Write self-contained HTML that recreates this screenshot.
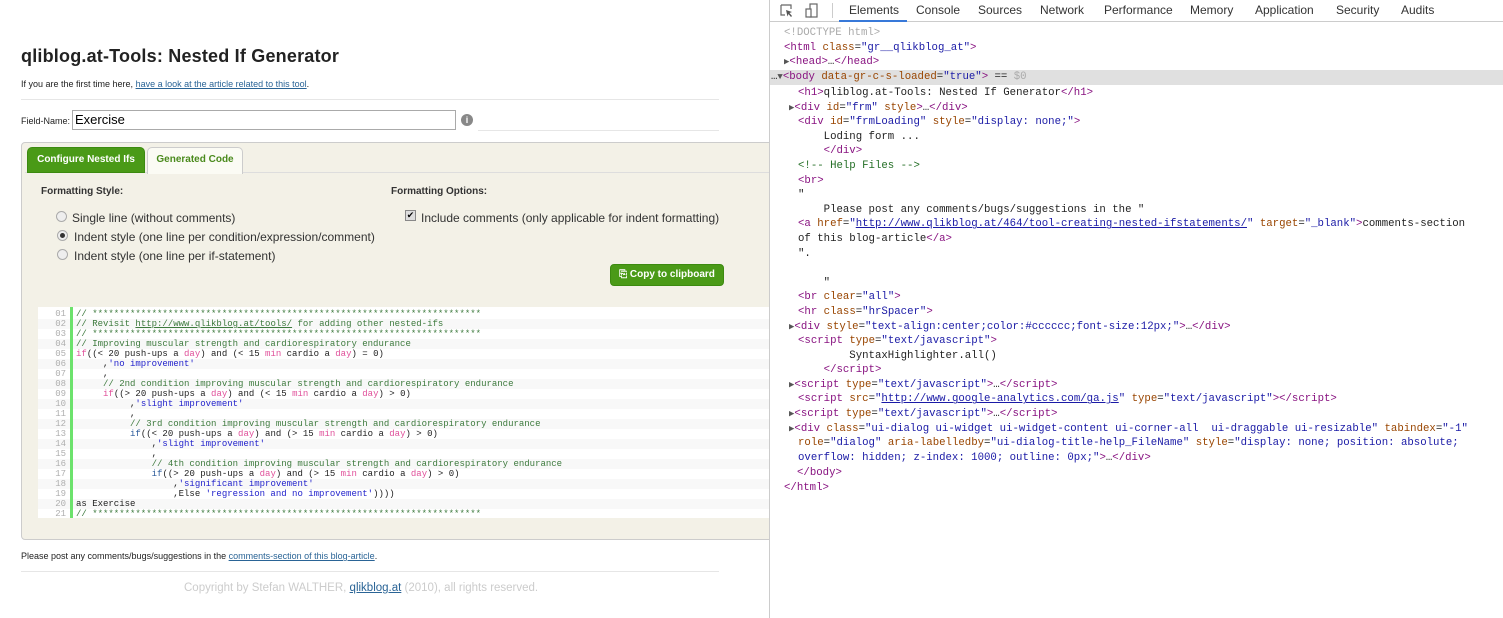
<!DOCTYPE html>
<html><head><meta charset="utf-8"><style>
*{margin:0;padding:0;box-sizing:border-box}
body{width:1503px;height:618px;overflow:hidden;background:#fff;font-family:"Liberation Sans",sans-serif;position:relative}
.a{position:absolute;white-space:pre}
#left{position:absolute;left:0;top:0;width:769px;height:618px;overflow:hidden}
#dv{position:absolute;left:769px;top:0;width:734px;height:618px;border-left:1px solid #ccc;overflow:hidden}
h1{position:absolute;left:21px;top:46px;font-size:18px;font-weight:bold;color:#222;letter-spacing:0.2px}
.sm{font-size:9px;color:#222}
a{color:#2a6496}
.hr{position:absolute;height:1px;background:#e6e6e6}
.panel{position:absolute;left:21px;top:142px;width:760px;height:398px;background:#f3f1e7;border:1px solid #ccc;border-radius:4px}
.tabbar{position:absolute;left:3px;top:3px;right:0;height:27px;border-bottom:1px solid #ddd}
.tab{position:absolute;top:4px;height:26px;border-radius:5px 5px 0 0;font-size:10px;font-weight:bold;line-height:24px;text-align:center}
.code{position:absolute;left:38px;top:307px;width:740px;height:211px;background:#fff}
.ln{position:absolute;left:0;height:10px;width:740px;font-family:"Liberation Mono",monospace;font-size:9px;line-height:10px;color:#222}
.ln:nth-child(odd){background:#f8f8f8}
.ln .n{position:absolute;left:0;width:28px;text-align:right;color:#afafaf}
.ln .t{position:absolute;left:38px;white-space:pre}
.bar{position:absolute;left:32px;top:0;width:3px;height:211px;background:#6ce26c;z-index:5}
.c{color:#3d7a3d}.s{color:#2222cc}.k{color:#2a5a9a;}.p{color:#e0509a}
.d{position:absolute;font-family:"Liberation Mono",monospace;font-size:10.7px;white-space:pre;color:#222;line-height:14.6px}
.tg{color:#881280}.an{color:#994500}.av{color:#1a1aa6}.cm{color:#236e25}.g{color:#aaa}
.tri{color:#555;font-size:9px}
</style></head><body>
<div id="left">
<h1>qliblog.at-Tools: Nested If Generator</h1>
<div class="a sm" style="left:21px;top:79px">If you are the first time here, <a href="#">have a look at the article related to this tool</a>.</div>
<div class="hr" style="left:21px;top:99px;width:698px"></div>
<div class="a sm" style="left:21px;top:116px">Field-Name:</div>
<div class="a" style="left:72px;top:110px;width:384px;height:20px;border:1px solid #aaa;background:#fff;font-size:13px;padding:1px 2px">Exercise</div>
<div class="a" style="left:461px;top:114px;width:12px;height:12px;border-radius:50%;background:#888;color:#fff;font-size:9px;font-weight:bold;text-align:center;line-height:12px">i</div>
<div class="hr" style="left:478px;top:130px;width:241px"></div>
<div class="panel">
 <div class="tabbar"></div>
 <div class="tab" style="left:5px;width:118px;background:#4a9a17;color:#fff;border:1px solid #3c8a10">Configure Nested Ifs</div>
 <div class="tab" style="left:125px;width:96px;background:#fbfbf4;color:#4a8a1c;border:1px solid #ccc;border-bottom:none;height:27px">Generated Code</div>
</div>
<div class="a" style="left:41px;top:186px;font-size:10px;font-weight:bold;color:#333">Formatting Style:</div>
<div class="a" style="left:391px;top:186px;font-size:10px;font-weight:bold;color:#333">Formatting Options:</div>
<div class="a" style="left:56px;top:211px;width:11px;height:11px;border-radius:50%;border:1px solid #aaa;background:#eee"></div>
<div class="a" style="left:72px;top:211px;font-size:12px;color:#333">Single line (without comments)</div>
<div class="a" style="left:57px;top:230px;width:11px;height:11px;border-radius:50%;border:1px solid #aaa;background:#eee"><div style="width:5px;height:5px;border-radius:50%;background:#333;margin:2px"></div></div>
<div class="a" style="left:74px;top:230px;font-size:12px;color:#333">Indent style (one line per condition/expression/comment)</div>
<div class="a" style="left:57px;top:249px;width:11px;height:11px;border-radius:50%;border:1px solid #aaa;background:#eee"></div>
<div class="a" style="left:74px;top:249px;font-size:12px;color:#333">Indent style (one line per if-statement)</div>
<div class="a" style="left:405px;top:210px;width:11px;height:11px;border:1px solid #888;background:#ddd;font-size:9px;line-height:9px;text-align:center">✔</div>
<div class="a" style="left:421px;top:211px;font-size:12px;color:#333">Include comments (only applicable for indent formatting)</div>
<div class="a" style="left:610px;top:264px;width:114px;height:22px;background:#4a9a17;border:1px solid #3c8a10;border-radius:4px;color:#fff;font-size:10px;font-weight:bold;line-height:20px;text-align:center">⎘ Copy to clipboard</div>
<div class="code">
<div class="bar"></div>
<div class="ln" style="top:2px"><span class="n">01</span><span class="t c">// ************************************************************************</span></div>
<div class="ln" style="top:12px"><span class="n">02</span><span class="t c">// Revisit <u>http://www.qlikblog.at/tools/</u> for adding other nested-ifs</span></div>
<div class="ln" style="top:22px"><span class="n">03</span><span class="t c">// ************************************************************************</span></div>
<div class="ln" style="top:32px"><span class="n">04</span><span class="t c">// Improving muscular strength and cardiorespiratory endurance</span></div>
<div class="ln" style="top:42px"><span class="n">05</span><span class="t"><span class="p">if</span>((&lt; 20 push-ups a <span class="p">day</span>) and (&lt; 15 <span class="p">min</span> cardio a <span class="p">day</span>) = 0)</span></div>
<div class="ln" style="top:52px"><span class="n">06</span><span class="t">     ,<span class="s">'no improvement'</span></span></div>
<div class="ln" style="top:62px"><span class="n">07</span><span class="t">     ,</span></div>
<div class="ln" style="top:72px"><span class="n">08</span><span class="t c">     // 2nd condition improving muscular strength and cardiorespiratory endurance</span></div>
<div class="ln" style="top:82px"><span class="n">09</span><span class="t">     <span class="p">if</span>((&gt; 20 push-ups a <span class="p">day</span>) and (&lt; 15 <span class="p">min</span> cardio a <span class="p">day</span>) &gt; 0)</span></div>
<div class="ln" style="top:92px"><span class="n">10</span><span class="t">          ,<span class="s">'slight improvement'</span></span></div>
<div class="ln" style="top:102px"><span class="n">11</span><span class="t">          ,</span></div>
<div class="ln" style="top:112px"><span class="n">12</span><span class="t c">          // 3rd condition improving muscular strength and cardiorespiratory endurance</span></div>
<div class="ln" style="top:122px"><span class="n">13</span><span class="t">          <span class="k">if</span>((&lt; 20 push-ups a <span class="p">day</span>) and (&gt; 15 <span class="p">min</span> cardio a <span class="p">day</span>) &gt; 0)</span></div>
<div class="ln" style="top:132px"><span class="n">14</span><span class="t">              ,<span class="s">'slight improvement'</span></span></div>
<div class="ln" style="top:142px"><span class="n">15</span><span class="t">              ,</span></div>
<div class="ln" style="top:152px"><span class="n">16</span><span class="t c">              // 4th condition improving muscular strength and cardiorespiratory endurance</span></div>
<div class="ln" style="top:162px"><span class="n">17</span><span class="t">              <span class="k">if</span>((&gt; 20 push-ups a <span class="p">day</span>) and (&gt; 15 <span class="p">min</span> cardio a <span class="p">day</span>) &gt; 0)</span></div>
<div class="ln" style="top:172px"><span class="n">18</span><span class="t">                  ,<span class="s">'significant improvement'</span></span></div>
<div class="ln" style="top:182px"><span class="n">19</span><span class="t">                  ,Else <span class="s">'regression and no improvement'</span>))))</span></div>
<div class="ln" style="top:192px"><span class="n">20</span><span class="t">as Exercise</span></div>
<div class="ln" style="top:202px"><span class="n">21</span><span class="t c">// ************************************************************************</span></div>
</div>
<div class="a sm" style="left:21px;top:551px">Please post any comments/bugs/suggestions in the <a href="#">comments-section of this blog-article</a>.</div>
<div class="hr" style="left:21px;top:571px;width:698px"></div>
<div class="a" style="left:184px;top:582px;font-size:11.5px;color:#ccc">Copyright by Stefan WALTHER, <a href="#" style="color:#2a6496">qlikblog.at</a> (2010), all rights reserved.</div>
</div>
<div id="dv">
<div class="a" style="left:0;top:0;width:734px;height:22px;border-bottom:1px solid #ccc;background:#fff"></div>
<svg class="a" style="left:9px;top:3px" width="40" height="16" viewBox="0 0 40 16"><path d="M2 2h10v4M2 2v10h4" fill="none" stroke="#666" stroke-width="1.2"/><path d="M7 7l6 2-2.5 1 2.5 3-1 1-2.5-3-1 2.5z" fill="#555"/><rect x="31" y="1" width="7" height="13" fill="none" stroke="#666" stroke-width="1.2"/><rect x="27" y="6" width="5" height="8" fill="#fff" stroke="#666" stroke-width="1.2"/></svg>
<div class="a" style="left:62px;top:3px;width:1px;height:15px;background:#ccc"></div>
<div class="a" style="left:79px;top:3px;font-size:12px;color:#333">Elements</div>
<div class="a" style="left:69px;top:20px;width:68px;height:2px;background:#3879d9"></div>
<div class="a" style="left:146px;top:3px;font-size:12px;color:#333">Console</div>
<div class="a" style="left:208px;top:3px;font-size:12px;color:#333">Sources</div>
<div class="a" style="left:270px;top:3px;font-size:12px;color:#333">Network</div>
<div class="a" style="left:334px;top:3px;font-size:12px;color:#333">Performance</div>
<div class="a" style="left:420px;top:3px;font-size:12px;color:#333">Memory</div>
<div class="a" style="left:485px;top:3px;font-size:12px;color:#333">Application</div>
<div class="a" style="left:566px;top:3px;font-size:12px;color:#333">Security</div>
<div class="a" style="left:631px;top:3px;font-size:12px;color:#333">Audits</div>
<div class="a" style="left:0;top:70px;width:734px;height:15px;background:#e0e0e0"></div>
<div class="d" style="left:14px;top:26px"><span class="g">&lt;!DOCTYPE html&gt;</span>
<span class="tg">&lt;html</span> <span class="an">class</span>=<span class="av">"gr__qlikblog_at"</span><span class="tg">&gt;</span>
<span class="tri">▶</span><span class="tg">&lt;head&gt;</span>…<span class="tg">&lt;/head&gt;</span></div>
<div class="d" style="left:1px;top:70px">…<span class="tri">▼</span><span class="tg">&lt;body</span> <span class="an">data-gr-c-s-loaded</span>=<span class="av">"true"</span><span class="tg">&gt;</span> == <span class="g">$0</span></div>
<div class="d" style="left:28px;top:86px"><span class="tg">&lt;h1&gt;</span>qliblog.at-Tools: Nested If Generator<span class="tg">&lt;/h1&gt;</span></div>
<div class="d" style="left:28px;top:100.6px"><span class="tri" style="margin-left:-9px">▶</span><span class="tg">&lt;div</span> <span class="an">id</span>=<span class="av">"frm"</span> <span class="an">style</span><span class="tg">&gt;</span>…<span class="tg">&lt;/div&gt;</span>
<span class="tg">&lt;div</span> <span class="an">id</span>=<span class="av">"frmLoading"</span> <span class="an">style</span>=<span class="av">"display: none;"</span><span class="tg">&gt;</span>
    Loding form ...
    <span class="tg">&lt;/div&gt;</span>
<span class="cm">&lt;!-- Help Files --&gt;</span>
<span class="tg">&lt;br&gt;</span>
"
    Please post any comments/bugs/suggestions in the "
<span class="tg">&lt;a</span> <span class="an">href</span>=<span class="av">"<u>http://www.qlikblog.at/464/tool-creating-nested-ifstatements/</u>"</span> <span class="an">target</span>=<span class="av">"_blank"</span><span class="tg">&gt;</span>comments-section
of this blog-article<span class="tg">&lt;/a&gt;</span>
".

    "
<span class="tg">&lt;br</span> <span class="an">clear</span>=<span class="av">"all"</span><span class="tg">&gt;</span>
<span class="tg">&lt;hr</span> <span class="an">class</span>=<span class="av">"hrSpacer"</span><span class="tg">&gt;</span>
<span class="tri" style="margin-left:-9px">▶</span><span class="tg">&lt;div</span> <span class="an">style</span>=<span class="av">"text-align:center;color:#cccccc;font-size:12px;"</span><span class="tg">&gt;</span>…<span class="tg">&lt;/div&gt;</span>
<span class="tg">&lt;script</span> <span class="an">type</span>=<span class="av">"text/javascript"</span><span class="tg">&gt;</span>
        SyntaxHighlighter.all()
    <span class="tg">&lt;/script&gt;</span>
<span class="tri" style="margin-left:-9px">▶</span><span class="tg">&lt;script</span> <span class="an">type</span>=<span class="av">"text/javascript"</span><span class="tg">&gt;</span>…<span class="tg">&lt;/script&gt;</span>
<span class="tg">&lt;script</span> <span class="an">src</span>=<span class="av">"<u>http://www.google-analytics.com/ga.js</u>"</span> <span class="an">type</span>=<span class="av">"text/javascript"</span><span class="tg">&gt;&lt;/script&gt;</span>
<span class="tri" style="margin-left:-9px">▶</span><span class="tg">&lt;script</span> <span class="an">type</span>=<span class="av">"text/javascript"</span><span class="tg">&gt;</span>…<span class="tg">&lt;/script&gt;</span>
<span class="tri" style="margin-left:-9px">▶</span><span class="tg">&lt;div</span> <span class="an">class</span>=<span class="av">"ui-dialog ui-widget ui-widget-content ui-corner-all  ui-draggable ui-resizable"</span> <span class="an">tabindex</span>=<span class="av">"-1"</span>
<span class="an">role</span>=<span class="av">"dialog"</span> <span class="an">aria-labelledby</span>=<span class="av">"ui-dialog-title-help_FileName"</span> <span class="an">style</span>=<span class="av">"display: none; position: absolute;</span>
<span class="av">overflow: hidden; z-index: 1000; outline: 0px;"</span><span class="tg">&gt;</span>…<span class="tg">&lt;/div&gt;</span></div>
<div class="d" style="left:27px;top:466px"><span class="tg">&lt;/body&gt;</span></div>
<div class="d" style="left:14px;top:481px"><span class="tg">&lt;/html&gt;</span></div>
</div>
</body></html>
